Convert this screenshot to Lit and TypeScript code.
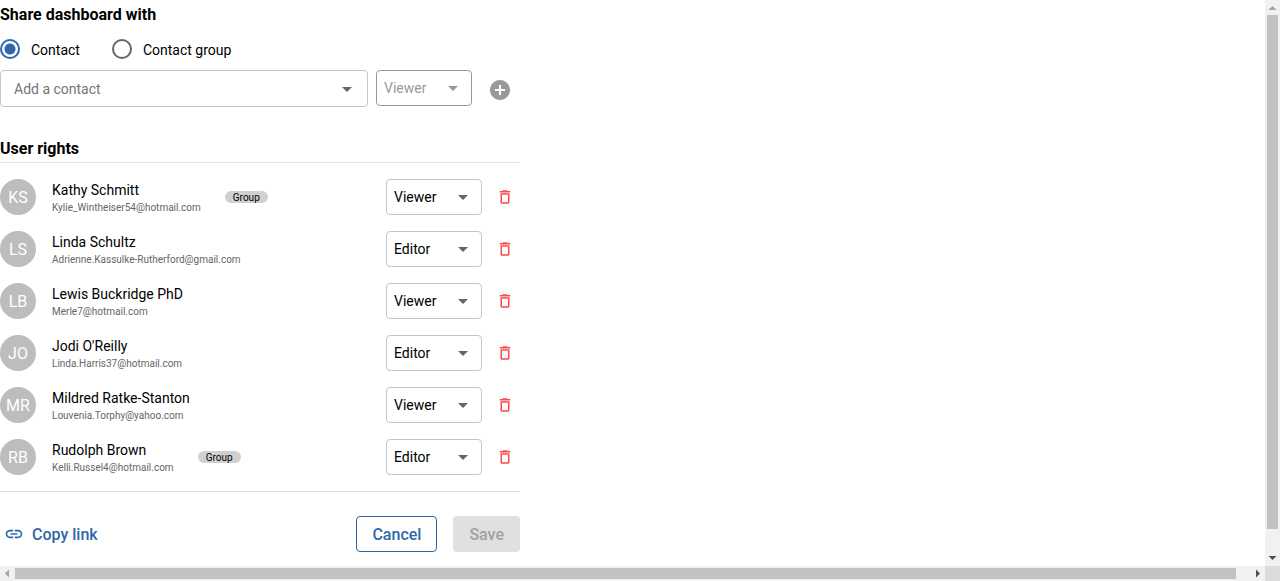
import { LitElement, html, css, svg } from "lit";
import { customElement, property, state } from "lit/decorators.js";

interface Contact {
  name: string;
  initials: string;
  email: string;
  role: "Viewer" | "Editor";
  group?: boolean;
}

const contacts: Contact[] = [
  { name: "Kathy Schmitt", initials: "KS", email: "Kylie_Wintheiser54@hotmail.com", role: "Viewer", group: true },
  { name: "Linda Schultz", initials: "LS", email: "Adrienne.Kassulke-Rutherford@gmail.com", role: "Editor" },
  { name: "Lewis Buckridge PhD", initials: "LB", email: "Merle7@hotmail.com", role: "Viewer" },
  { name: "Jodi O'Reilly", initials: "JO", email: "Linda.Harris37@hotmail.com", role: "Editor" },
  { name: "Mildred Ratke-Stanton", initials: "MR", email: "Louvenia.Torphy@yahoo.com", role: "Viewer" },
  { name: "Rudolph Brown", initials: "RB", email: "Kelli.Russel4@hotmail.com", role: "Editor", group: true },
];

const icon = (path: string, size: number) => html`<svg width=${size} height=${size} viewBox="0 0 24 24" fill="currentColor" aria-hidden="true">
  ${svg`<path d=${path}></path>`}
</svg>`;

const ARROW = "M7 10l5 5 5-5z";
const ADD = "M12 2C6.48 2 2 6.48 2 12s4.48 10 10 10 10-4.48 10-10S17.52 2 12 2zm5 11h-4v4h-2v-4H7v-2h4V7h2v4h4v2z";
const TRASH = "M6 19c0 1.1.9 2 2 2h8c1.1 0 2-.9 2-2V7H6v12zM8 9h8v10H8V9zm7.5-5l-1-1h-5l-1 1H5v2h14V4z";
const LINK = "M3.9 12c0-1.71 1.39-3.1 3.1-3.1h4V7H7c-2.76 0-5 2.24-5 5s2.24 5 5 5h4v-1.9H7c-1.71 0-3.1-1.39-3.1-3.1zM8 13h8v-2H8v2zm9-6h-4v1.9h4c1.71 0 3.1 1.39 3.1 3.1s-1.39 3.1-3.1 3.1h-4V17h4c2.76 0 5-2.24 5-5s-2.24-5-5-5z";

@customElement("role-select")
class RoleSelect extends LitElement {
  @property() value = "Viewer";
  @property() label = "Role";
  @property({ type: Boolean }) disabled = false;

  static styles = css`
    :host { display: block; width: 96px; }
    .field { display: grid; align-items: center; color: #666; }
    .field > * { grid-area: 1 / 1; }
    .field svg { justify-self: end; margin-right: 7px; pointer-events: none; }
    select {
      appearance: none;
      box-sizing: border-box;
      width: 100%;
      height: 36px;
      padding: 0 32px 0 7px;
      border: 1px solid #c4c4c4;
      border-radius: 4px;
      background: #fff;
      color: #000;
      font: 14px/20px Roboto, sans-serif;
    }
    .disabled { color: #999; }
    .disabled select { border-color: #999; color: #999; opacity: 1; }
  `;

  render() {
    return html`<div class="field ${this.disabled ? "disabled" : ""}">
      <select aria-label=${this.label} ?disabled=${this.disabled}>
        <option ?selected=${this.value === "Viewer"}>Viewer</option>
        <option ?selected=${this.value === "Editor"}>Editor</option>
      </select>
      ${icon(ARROW, 24)}
    </div>`;
  }
}

@customElement("scroll-bar")
class ScrollBar extends LitElement {
  @property({ reflect: true }) direction = "vertical";
  @property({ type: Number }) extent = 100;

  static styles = css`
    :host { display: flex; background: #f1f1f1; }
    :host([direction="vertical"]) { flex-direction: column; }
    .arrow { flex: none; width: 15px; height: 15px; fill: #505050; }
    .start { fill: #a3a3a3; }
    .track { flex: 1; min-width: 0; min-height: 0; box-sizing: border-box; padding: 0 2px; }
    .thumb { background: #c1c1c1; height: 100%; }
    :host([direction="horizontal"]) .track { padding: 2px 0; }
  `;

  render() {
    const vertical = this.direction === "vertical";
    const start = vertical ? "M3.5 10L7.5 6L11.5 10z" : "M9 3.5L5 7.5L9 11.5z";
    const end = vertical ? "M3.5 5L7.5 9L11.5 5z" : "M6 3.5L10 7.5L6 11.5z";
    return html`
      <svg class="arrow start" viewBox="0 0 15 15" aria-hidden="true"><path d=${start}></path></svg>
      <div class="track"><div class="thumb" style="${vertical ? "height" : "width"}:${this.extent}%"></div></div>
      <svg class="arrow" viewBox="0 0 15 15" aria-hidden="true"><path d=${end}></path></svg>
    `;
  }
}

@customElement("app-root")
class AppRoot extends LitElement {
  @state() private kind = "contact";

  static styles = css`
    :host {
      display: grid;
      grid-template-columns: minmax(0, 1fr) 15px;
      grid-template-rows: minmax(0, 1fr) 15px;
      height: 100vh;
      background: #fff;
      color: #000;
      font: 14px/20px Roboto, sans-serif;
    }
    .view { overflow: hidden; }
    .corner { background: #dcdcdc; }
    .panel { max-width: 520px; }
    h2 { margin: 0; font-size: 16px; line-height: 24px; font-weight: 700; }
    .title { padding-top: 3px; }
    .kinds { display: flex; gap: 32px; padding: 12px 0 9px; }
    .kind { display: flex; align-items: flex-start; gap: 11px; }
    .kind span { padding-top: 1px; line-height: 21px; }
    .kind input {
      appearance: none;
      box-sizing: border-box;
      width: 20px;
      height: 20px;
      margin: 0;
      border: 2px solid #666;
      border-radius: 50%;
    }
    .kind input:checked {
      border-color: #2e68aa;
      background: radial-gradient(circle, #2e68aa 5px, transparent 6px);
    }
    .add { display: flex; align-items: flex-start; gap: 8px; }
    .combo { display: grid; flex: 1; align-items: center; color: #666; }
    .combo > * { grid-area: 1 / 1; }
    .combo input {
      box-sizing: border-box;
      width: 100%;
      height: 37px;
      padding: 0 40px 0 13px;
      border: 1px solid #c4c4c4;
      border-radius: 4px;
      background: none;
      font: inherit;
    }
    .combo input::placeholder { color: #757575; opacity: 1; }
    button {
      padding: 0;
      border: 0;
      background: none;
      color: inherit;
      font: 500 16px/24px Roboto, sans-serif;
    }
    .open { justify-self: end; display: flex; margin-right: 9px; }
    .plus { display: flex; padding: 8px; color: #999; }
    .rights { padding: 27px 0 1px; border-bottom: 1px solid #e0e0e0; }
    ul { margin: 0; padding: 8px 0; list-style: none; border-bottom: 1px solid #e0e0e0; }
    li { display: flex; align-items: center; padding: 8px 0; }
    .avatar {
      display: grid;
      place-items: center;
      box-sizing: border-box;
      width: 36px;
      height: 36px;
      padding-top: 2px;
      margin-right: 16px;
      border-radius: 50%;
      background: #bdbdbd;
      color: #fff;
      font-size: 16px;
    }
    .name { line-height: 22px; }
    .email { color: #666; font-size: 10px; line-height: 14px; }
    .chip {
      margin-left: 24px;
      padding: 1px 8px 0;
      border-radius: 6px;
      background: #d0d0d0;
      font-size: 10px;
      line-height: 11px;
    }
    .role { margin-left: auto; }
    .remove { display: flex; margin: 0 6px 0 14px; color: #ff4a4a; }
    .actions { display: flex; align-items: center; gap: 16px; padding-top: 24px; }
    .copy { display: flex; align-items: center; gap: 8px; margin: 0 auto 0 4px; color: #2e68aa; }
    .copy span { padding-top: 2px; }
    .cancel, .save { box-sizing: border-box; height: 36px; padding: 2px 16px 0; border-radius: 4px; }
    .cancel { padding: 2px 15px 0; border: 1px solid #2e68aa; color: #2e68aa; }
    .save { background: #e0e0e0; color: #a0a0a0; }
  `;

  private kindOption(value: string, label: string) {
    return html`<label class="kind">
      <input type="radio" name="kind" .checked=${this.kind === value} @change=${() => (this.kind = value)} />
      <span>${label}</span>
    </label>`;
  }

  render() {
    return html`
      <main class="view">
        <div class="panel">
          <h2 class="title">Share dashboard with</h2>
          <div class="kinds" role="radiogroup" aria-label="Share dashboard with">
            ${this.kindOption("contact", "Contact")}
            ${this.kindOption("group", "Contact group")}
          </div>
          <div class="add">
            <div class="combo">
              <input type="text" placeholder="Add a contact" aria-label="Add a contact" />
              <button class="open" type="button" aria-label="Open">${icon(ARROW, 24)}</button>
            </div>
            <role-select disabled></role-select>
            <button class="plus" type="button" aria-label="Add" disabled>${icon(ADD, 24)}</button>
          </div>
          <h2 class="rights">User rights</h2>
          <ul>
            ${contacts.map(
              (c) => html`<li>
                <span class="avatar">${c.initials}</span>
                <div>
                  <div class="name">${c.name}</div>
                  <div class="email">${c.email}</div>
                </div>
                ${c.group ? html`<span class="chip">Group</span>` : ""}
                <role-select class="role" value=${c.role} label="Role of ${c.name}"></role-select>
                <button class="remove" type="button" aria-label="Remove ${c.name}">${icon(TRASH, 18)}</button>
              </li>`
            )}
          </ul>
          <div class="actions">
            <button class="copy" type="button">${icon(LINK, 20)}<span>Copy link</span></button>
            <button class="cancel" type="button">Cancel</button>
            <button class="save" type="button" disabled>Save</button>
          </div>
        </div>
      </main>
      <scroll-bar direction="vertical" extent="95.9"></scroll-bar>
      <scroll-bar direction="horizontal" extent="98.9"></scroll-bar>
      <div class="corner"></div>
    `;
  }
}
